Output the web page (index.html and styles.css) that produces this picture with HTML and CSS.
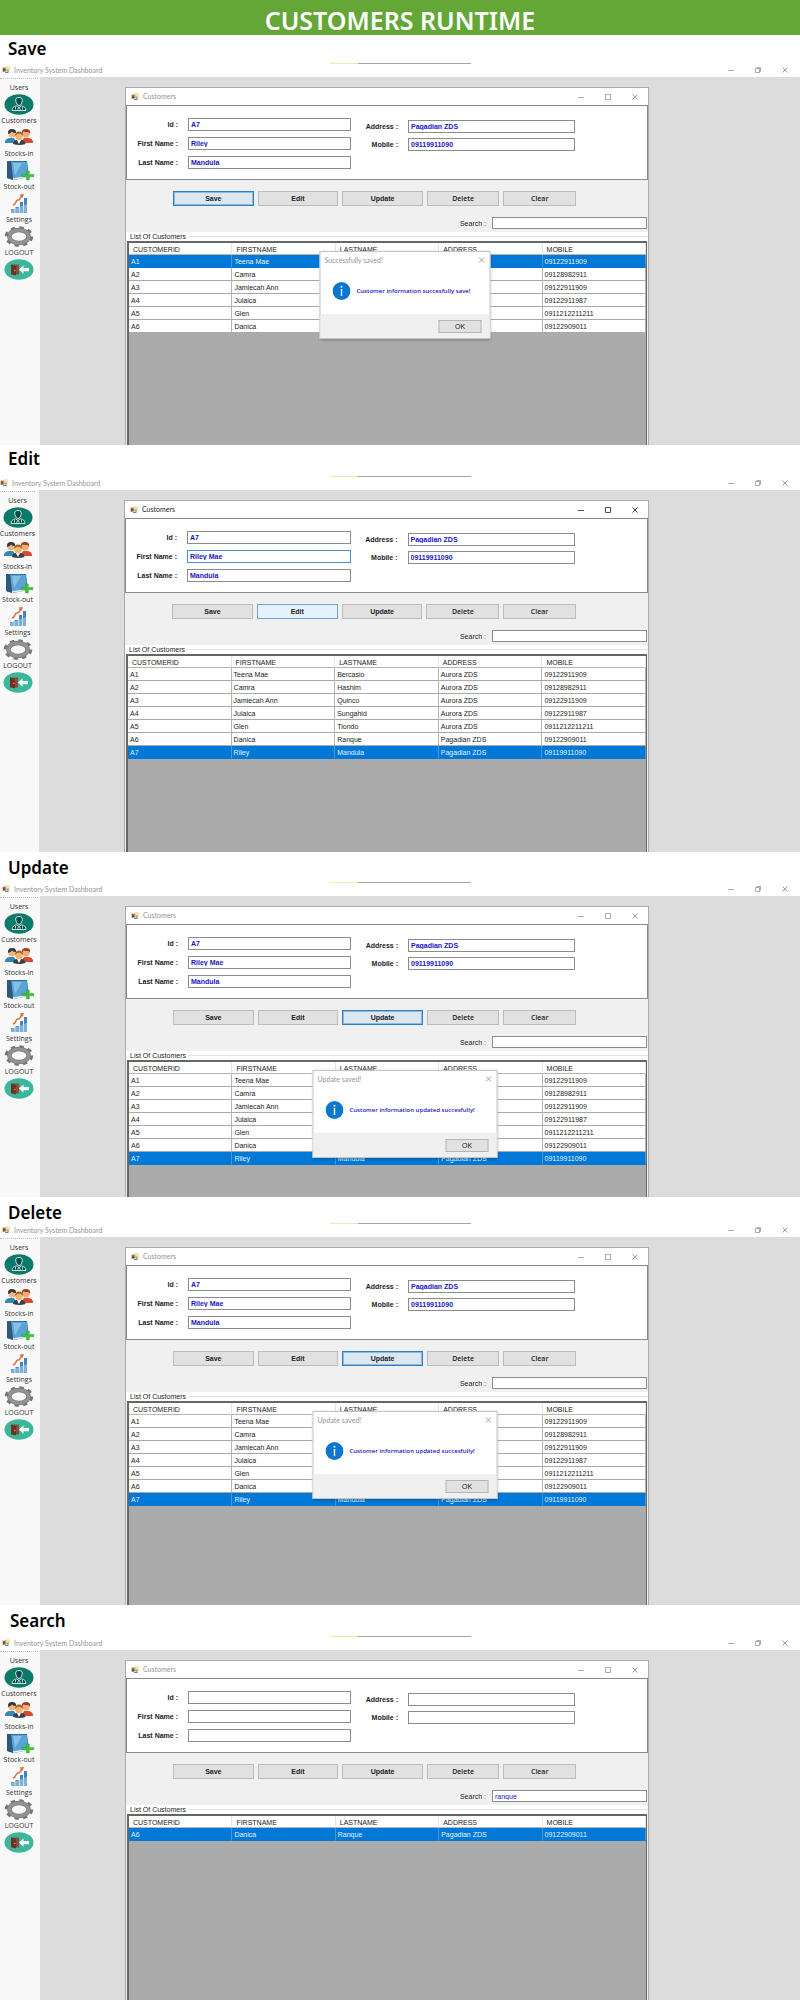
FILE: index.html
```html
<!DOCTYPE html>
<html lang="en">
<head>
<meta charset="utf-8">
<meta name="viewport" content="width=device-width, initial-scale=1">
<title>Customers Runtime</title>
<link rel="stylesheet" href="styles.css">
</head>
<body>
<svg class="sprite" aria-hidden="true">
  <symbol id="i-app" viewBox="0 0 16 16">
    <rect x="1" y="3" width="8" height="9" fill="#b9935f"/><rect x="2" y="5" width="4" height="5" fill="#7c4a2d"/>
    <rect x="8" y="1" width="7" height="8" fill="#e9c968"/><rect x="9" y="2" width="5" height="4" fill="#f6e6ac"/>
    <rect x="6" y="8" width="7" height="6" fill="#6d7fa8"/><rect x="7" y="9" width="4" height="3" fill="#e2e6f0"/>
  </symbol>
  <symbol id="i-users" viewBox="0 0 30 21">
    <ellipse cx="15" cy="10.500" rx="14.500" ry="10.200" fill="#0b7a68"/>
    <path d="M12 8q-1.500-4.500 3-4.500T18 8q-.8 3.500-3 3.500T12 8z" fill="#0a4b49" stroke="#d6f1ea" stroke-width=".9"/>
    <path d="M8 16.500c0-3 2-4 4.500-4.700l2.500 1.800 2.500-1.800c2.500.7 4.500 1.700 4.500 4.700z" fill="#0a4b49" stroke="#d6f1ea" stroke-width=".9"/>
    <circle cx="15" cy="15.300" r="1.300" fill="none" stroke="#d6f1ea" stroke-width=".8"/><path d="M11.500 13v2.500M18.500 13v2.500" stroke="#d6f1ea" stroke-width=".8"/>
  </symbol>
  <symbol id="i-customers" viewBox="0 0 30 21">
    <path d="M1 14.500q1-3.500 5-3.500h4l3 5H1z" fill="#3489b4"/><path d="M29 14.500q-1-3.500-5-3.500h-4l-3 5h12z" fill="#d8492f"/>
    <circle cx="8" cy="7" r="3.600" fill="#f0b57c"/><path d="M4 7q-.5-5 4-5t4 4q-3 0-4-1.500Q7 6 4 7z" fill="#33383a"/>
    <circle cx="22" cy="7" r="3.600" fill="#efad73"/><path d="M18 7q-1-5 4-5t4 5l-1.500-2q-4 0-5-.5z" fill="#9c3f22"/>
    <path d="M9 17q.5-4 4-4h4q4 0 4.500 4-6 2-12.500 0z" fill="#3b4048"/><path d="m13 13 2 4 2-4z" fill="#fff"/>
    <circle cx="15" cy="9.500" r="3.700" fill="#f3b56c"/><path d="M11 9q0-4.500 4-4.500T19 9q-2-2.500-4-2.500T11 9z" fill="#9a632c"/>
  </symbol>
  <symbol id="i-stockin" viewBox="0 0 30 21">
    <path d="M3 1h20l2 16-15 3-7-2z" fill="#2b6ea8"/><path d="M7 2h16l1 14-15 2z" fill="#5aa3d6"/><path d="M9 3h9L11 15z" fill="#85c0e6"/>
    <path d="M3 1h4l2 19-6-2z" fill="#315879"/><path d="m9 18 15-2v1.500L9 20z" fill="#dfe9f0"/>
    <path d="M22.500 11h2.800v3.400H30v2.400h-4.700V20h-2.800v-3.200H18v-2.400h4.500z" fill="#3fc138" stroke="#26942a" stroke-width=".4"/>
  </symbol>
  <symbol id="i-stockout" viewBox="0 0 30 21">
    <path d="M7 20v-4h3.500v4zM11.500 20v-6H15v6zM16 20V9h3v11zM20 20V5h3v15z" fill="#4584bf"/><path d="M7 20v-3l16-6v9z" fill="#a7cdea" opacity=".6"/>
    <path d="M9 12c4-1 2-5 5-5s2-3 4-4" fill="none" stroke="#d9703b" stroke-width="1.500"/><path d="m15.500 1.500 4.500-.5-1.500 4z" fill="#d9703b"/>
  </symbol>
  <symbol id="i-settings" viewBox="0 0 30 21">
    <ellipse cx="15" cy="10.500" rx="12.500" ry="8.400" fill="none" stroke="#77777a" stroke-width="3.600" stroke-dasharray="4.150 4.150"/>
    <ellipse cx="15" cy="10.500" rx="9.600" ry="6.500" fill="#fafafa" stroke="#77777a" stroke-width="4.500"/>
    <ellipse cx="15" cy="10.500" rx="9.600" ry="6.500" fill="none" stroke="#939396" stroke-width="3.200"/>
  </symbol>
  <symbol id="i-logout" viewBox="0 0 30 21">
    <ellipse cx="15" cy="10.500" rx="14.500" ry="10.200" fill="#3bb79b"/>
    <path d="M7 5.500h8v10H7z" fill="#8e4a39"/><path d="m7 5.500 5 1.500v9.500l-5-1.500z" fill="#6b3327"/><circle cx="10.800" cy="11.500" r=".7" fill="#e7b54a"/>
    <path d="m15 10.500 4.500-4v2.500H25v3.200h-5.500v2.500z" fill="#f6fffd"/>
  </symbol>
  <symbol id="i-min" viewBox="0 0 8 8"><path d="M1 4.500h6" stroke="currentColor" stroke-width=".8"/></symbol>
  <symbol id="i-max" viewBox="0 0 8 8"><path d="M1.500 1.500h5v5h-5z" fill="none" stroke="currentColor" stroke-width=".8"/></symbol>
  <symbol id="i-restore" viewBox="0 0 8 8"><path d="M1.500 2.500h4v4h-4zM3 2.500v-1h3.500v4h-1" fill="none" stroke="currentColor" stroke-width=".8"/></symbol>
  <symbol id="i-close" viewBox="0 0 8 8"><path d="m1.500 1.500 5 5m0-5-5 5" stroke="currentColor" stroke-width=".9"/></symbol>
  <symbol id="i-info" viewBox="0 0 18 18"><circle cx="9" cy="9" r="9" fill="#0b78d0"/><circle cx="9" cy="4.700" r="1" fill="#fff"/><path d="M9 7v7" stroke="#fff" stroke-width="1.400"/></symbol>
</svg>
<header class="banner"><h1 class="banner-title">CUSTOMERS RUNTIME</h1></header>
<main id="runs"></main>
<script src="script.js"></script>
</body>
</html>
```
FILE: styles.css
```css
* { box-sizing: border-box; }
body { margin: 0; background: #fff; color: #222; font-family: "Liberation Sans", Arial, sans-serif; font-size: 7px; line-height: 9px; }
button, input { font: inherit; margin: 0; padding: 0; border-radius: 0; }
svg { display: block; }
.sprite { position: absolute; width: 0; height: 0; }

.banner { background: #64a737; height: 35px; display: flex; align-items: center; justify-content: center; padding-top: 4px; }
.banner-title { margin: 0; color: #fff; font: 600 25px/30px "Noto Sans", "Open Sans", sans-serif; }

.run-title { margin: 0; padding-left: 8px; height: 28px; color: #000; font: 600 17px/28px "Noto Sans", "Open Sans", sans-serif; }
.run-edit .run-title { height: 31px; }
.run-update .run-title { height: 30px; line-height: 32px; }
.run-delete .run-title { height: 26px; line-height: 32px; }
.run-search .run-title { height: 31px; line-height: 32px; padding-left: 10px; }

.progress { display: grid; grid-template-columns: 330fr 28fr 113fr 329fr; height: 1px; }
.progress-done { grid-column: 2; background: #f3e9b0; }
.progress-rest { grid-column: 3; background: #a5a5a5; }

.bar { display: flex; align-items: center; color: #949494; font-family: Lato, "Open Sans", sans-serif; }
.bar-icon { width: 8px; height: 8px; margin-right: 4px; }
.bar-name { flex: 1; }
.bar-controls { display: flex; gap: 19px; }
.bar-button { display: block; width: 8px; height: 8px; border: 0; background: none; color: inherit; }
.bar-button svg { width: 8px; height: 8px; }
.shell-bar { height: 13px; padding: 0 11px 1px 2px; }
.run-edit .shell-bar { padding-left: 0; }

.workspace { display: flex; background: #dcdcdc; min-height: 368px; }
.run-edit .workspace { min-height: 362px; }
.run-update .workspace { min-height: 301px; }
.run-search .workspace { min-height: 350px; }

.sidebar { width: 40px; padding: 1px 2px 0 0; background: #f9f9f9; }
.run-edit .sidebar { width: 39px; padding-right: 4px; }
.side-list { list-style: none; margin: 0; padding: 3px 0 0; border-top: 1px dotted #bbb; }
.side-link { display: flex; flex-direction: column; align-items: center; height: 33px; color: #333; text-decoration: none; font: 500 7px/12px "Open Sans", "Noto Sans", sans-serif; }
.side-link svg { width: 30px; height: 21px; }

.window { position: relative; flex: 1; min-width: 0; margin: 10px 151px 0 85px; border: 1px solid #aaa; border-bottom: 0; background: #f0f0f0; display: flex; flex-direction: column; }
.window-bar { height: 17px; padding: 0 9px 0 5px; background: #fff; }
.run-edit .window-bar { color: #222; }

.form { display: grid; grid-template-columns: 1fr 1fr; min-height: 75px; padding: 12px 72px 7px 0; border: 1px solid #8a8a8a; background: #fff; }
.form-column { display: flex; flex-direction: column; gap: 6px; }
.form-column + .form-column { gap: 5px; padding-top: 2px; }
.field { display: flex; align-items: center; gap: 10px; }
.field-label { width: 51px; text-align: right; font-weight: 700; }
.form-column + .form-column .field-label { width: 47px; }
.input { flex: 1; min-width: 0; height: 13px; padding: 0 2px; border: 1px solid #8c8c8c; background: #fff; color: #1c14c4; font-weight: 700; line-height: 11px; }
.input-active { border-color: #4a90cf; outline: 0; }

.actions { display: grid; grid-template-columns: 80fr 80fr 80fr 72fr 72fr; gap: 4px; padding: 11px 72px 0 47px; }
.action { height: 15px; border: 1px solid #bcbcbc; background: #e1e1e1; color: #222; font-weight: 700; }
.action-soft { font-weight: 600; font-family: "Open Sans", "Noto Sans", sans-serif; }
.action-default { border: 1px solid #2f7fc4; box-shadow: inset 0 0 0 1px #8dbbe0; background: #dce6ef; }
.action-hover { border-color: #6aa7d8; background: #e5f1fb; }

.search { display: flex; align-items: center; justify-content: flex-end; gap: 6px; padding: 11px 1px 3px; }
.search .input { flex: 0 1 155px; height: 12px; font-weight: 400; line-height: 10px; }
.list-title { display: flex; align-items: center; gap: 2px; height: 9px; margin: 0; padding-left: 4px; background: #fff; font-size: 7px; font-weight: 400; }
.list-title::after { content: ""; flex: 1; height: 1px; background: #e2e2e2; }

.grid { flex: 1; margin: 0 1px; border: 2px solid #666; border-bottom: 0; border-right-width: 1px; background: #ababab; }
.table { width: 100%; table-layout: fixed; border-collapse: separate; border-spacing: 0; background: #fff; }
.table th { height: 12px; padding: 1px 0 0 4px; border-bottom: 1px solid #b5b5b5; border-right: 1px solid #e4e4e4; font-weight: 400; text-align: left; line-height: 9px; }
.table td { height: 13px; padding: 0 0 0 2px; border-bottom: 1px solid #a9a9a9; border-right: 1px solid #b5b5b5; line-height: 9px; white-space: nowrap; }
.table .selected td { background: #0078d7; color: #e4f3ff; border-bottom-color: #0078d7; border-right-color: #4b95ce; }

.dialog { position: absolute; top: 163px; left: calc(50% + 18px); transform: translateX(-50%); width: 171px; border: 1px solid #c4c4c4; background: #fff; box-shadow: 0 1px 3px rgba(0, 0, 0, .25); }
.dialog-wide { width: 185px; }
.dialog-bar { height: 16px; padding: 0 4px; }
.dialog-body { display: flex; align-items: center; gap: 6px; height: 46px; padding: 0 0 0 12px; color: #1c14c4; font: 600 6px/9px "Open Sans", "Noto Sans", sans-serif; }
.dialog-body svg { flex: none; width: 18px; height: 18px; }
.dialog-foot { display: flex; justify-content: flex-end; padding: 6px 8px 5px; background: #f0f0f0; }
.dialog-ok { width: 43px; height: 13px; border: 1px solid #b5b5b5; background: #e1e1e1; color: #222; }
```
FILE: script.js
```js
const people = [
  ["A1", "Teena Mae", "Bercasio", "Aurora ZDS", "09122911909"],
  ["A2", "Camra", "Hashim", "Aurora ZDS", "09128982911"],
  ["A3", "Jamiecah Ann", "Quinco", "Aurora ZDS", "09122911909"],
  ["A4", "Julaica", "Sungahid", "Aurora ZDS", "09122911987"],
  ["A5", "Glen", "Tiondo", "Aurora ZDS", "0911212211211"],
  ["A6", "Danica", "Ranque", "Pagadian ZDS", "09122909011"],
  ["A7", "Riley", "Mandula", "Pagadian ZDS", "09119911090"]
];

const filled = first => ["A7", first, "Mandula", "Pagadian ZDS", "09119911090"];
const updated = { wide: true, title: "Update saved!", text: "Customer information updated succesfully!" };

const runs = [
  { key: "save", title: "Save", values: filled("Riley"), rows: people.slice(0, 6), selected: "A1", primary: "Save",
    dialog: { title: "Successfully saved!", text: "Customer information succesfully save!" } },
  { key: "edit", title: "Edit", values: filled("Riley Mae"), rows: people, selected: "A7", hover: "Edit", active: 1 },
  { key: "update", title: "Update", values: filled("Riley Mae"), rows: people, selected: "A7", primary: "Update", dialog: updated },
  { key: "delete", title: "Delete", values: filled("Riley Mae"), rows: people, selected: "A7", primary: "Update", dialog: updated },
  { key: "search", title: "Search", values: ["", "", "", "", ""], rows: [people[5]], selected: "A6", query: "ranque" }
];

const menu = [["Users", "users"], ["Customers", "customers"], ["Stocks-in", "stockin"], ["Stock-out", "stockout"], ["Settings", "settings"], ["LOGOUT", "logout"]];
const labels = ["Id :", "First Name :", "Last Name :", "Address :", "Mobile :"];
const headings = ["CUSTOMERID", "FIRSTNAME", "LASTNAME", "ADDRESS", "MOBILE"];

const icon = name => `<svg aria-hidden="true"><use href="#i-${name}"/></svg>`;
const control = (name, label) => `<button class="bar-button" type="button" aria-label="${label}">${icon(name)}</button>`;
const bar = (cls, name, middle) => `<div class="bar ${cls}"><svg class="bar-icon" aria-hidden="true"><use href="#i-app"/></svg><span class="bar-name">${name}</span>
  <div class="bar-controls">${control("min", "Minimize")}${control(middle, "Resize")}${control("close", "Close")}</div></div>`;

const field = (run, i) => `<div class="field"><label class="field-label" for="${run.key}-${i}">${labels[i]}</label>
  <input class="input${run.active === i ? " input-active" : ""}" id="${run.key}-${i}" type="text" value="${run.values[i]}"></div>`;

const action = (run, name, i) => {
  const state = run.primary === name ? " action-default" : run.hover === name ? " action-hover" : "";
  return `<button class="action${i > 2 ? " action-soft" : ""}${state}" type="button">${name}</button>`;
};

const dialog = d => `<div class="dialog${d.wide ? " dialog-wide" : ""}" role="dialog" aria-label="${d.title}">
  <div class="bar dialog-bar"><span class="bar-name">${d.title}</span>${control("close", "Close")}</div>
  <div class="dialog-body">${icon("info")}<span>${d.text}</span></div>
  <div class="dialog-foot"><button class="dialog-ok" type="button">OK</button></div></div>`;

document.getElementById("runs").innerHTML = runs.map(run => `
<section class="run run-${run.key}">
  <h2 class="run-title">${run.title}</h2>
  <div class="progress"><span class="progress-done"></span><span class="progress-rest"></span></div>
  ${bar("shell-bar", "Inventory System Dashboard", "restore")}
  <div class="workspace">
    <nav class="sidebar"><ul class="side-list">${menu.map(([name, id]) => `<li><a class="side-link" href="#${id}">${name}${icon(id)}</a></li>`).join("")}</ul></nav>
    <div class="window">
      ${bar("window-bar", "Customers", "max")}
      <div class="form">
        <div class="form-column">${[0, 1, 2].map(i => field(run, i)).join("")}</div>
        <div class="form-column">${[3, 4].map(i => field(run, i)).join("")}</div>
      </div>
      <div class="actions">${["Save", "Edit", "Update", "Delete", "Clear"].map((n, i) => action(run, n, i)).join("")}</div>
      <div class="search"><label for="${run.key}-q">Search :</label><input class="input" id="${run.key}-q" type="text" value="${run.query || ""}"></div>
      <h3 class="list-title">List Of Customers</h3>
      <div class="grid"><table class="table">
        <thead><tr>${headings.map(h => `<th scope="col">${h}</th>`).join("")}</tr></thead>
        <tbody>${run.rows.map(r => `<tr${r[0] === run.selected ? ' class="selected"' : ""}>${r.map(c => `<td>${c}</td>`).join("")}</tr>`).join("")}</tbody>
      </table></div>
      ${run.dialog ? dialog(run.dialog) : ""}
    </div>
  </div>
</section>`).join("");
```
